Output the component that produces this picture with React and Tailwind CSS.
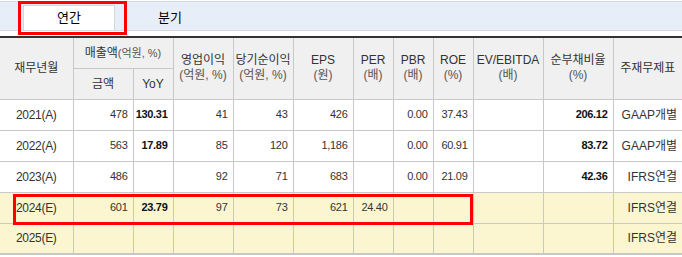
import React from "react";

const rows = [
  { y: "2021(A)", sales: "478", yoy: "130.31", op: "41", net: "43", eps: "426", per: "", pbr: "0.00", roe: "37.43", ev: "", debt: "206.12", fs: "GAAP개별" },
  { y: "2022(A)", sales: "563", yoy: "17.89", op: "85", net: "120", eps: "1,186", per: "", pbr: "0.00", roe: "60.91", ev: "", debt: "83.72", fs: "GAAP개별" },
  { y: "2023(A)", sales: "486", yoy: "", op: "92", net: "71", eps: "683", per: "", pbr: "0.00", roe: "21.09", ev: "", debt: "42.36", fs: "IFRS연결" },
  { y: "2024(E)", sales: "601", yoy: "23.79", op: "97", net: "73", eps: "621", per: "24.40", pbr: "", roe: "", ev: "", debt: "", fs: "IFRS연결", est: true },
  { y: "2025(E)", sales: "", yoy: "", op: "", net: "", eps: "", per: "", pbr: "", roe: "", ev: "", debt: "", fs: "IFRS연결", est: true },
];

const th = "border-l border-b border-[#c8c8c8] font-normal text-[#333] text-center align-middle whitespace-nowrap px-0";
const td = "border-l border-b border-[#c8c8c8] text-right pr-[5px] align-middle";

function Head({ top, sub }) {
  return (
    <div className="leading-[15px]">
      <div className="text-[12px]">{top}</div>
      <div className="text-[12px] text-[#555]">{sub}</div>
    </div>
  );
}

export default function App() {
  return (
    <div
      className="w-[682px] h-[257px] bg-white text-[#333] overflow-hidden"
      style={{ fontFamily: '"Liberation Sans", "Noto Sans CJK KR", sans-serif' }}
    >
      {/* tabs */}
      <div className="relative h-[35px]">
        <div className="mt-[1px] h-[30px] border-y border-[#d3dae8] bg-[#e8eef8] flex items-end pl-[23px]">
          <div className="w-[92px] h-[25px] bg-white border border-b-0 border-[#d0d6e2] flex items-center justify-center text-[13px] text-black">
            연간
          </div>
          <div className="w-[110px] h-[25px] flex items-center justify-center text-[13px] text-black">
            분기
          </div>
        </div>
        <div className="absolute left-[18px] top-0 w-[109px] h-[34px] border-[3px] border-[#f00]" />
      </div>

      {/* table */}
      <div className="relative">
        <table className="w-[682px] table-fixed border-collapse border-t-2 border-t-[#333] border-b-2 border-b-[#c8c8c8]">
          <colgroup>
            <col className="w-[73px]" />
            <col className="w-[60px]" />
            <col className="w-[40px]" />
            <col className="w-[60px]" />
            <col className="w-[60px]" />
            <col className="w-[60px]" />
            <col className="w-[40px]" />
            <col className="w-[40px]" />
            <col className="w-[40px]" />
            <col className="w-[70px]" />
            <col className="w-[70px]" />
            <col className="w-[69px]" />
          </colgroup>
          <thead className="bg-[#f0f0f0]">
            <tr className="h-[31px]">
              <th rowSpan={2} className={th + " border-l-0 text-[12px]"}>재무년월</th>
              <th colSpan={2} className={th + " text-[12px]"}>
                매출액<span className="text-[11px] text-[#555]">(억원, %)</span>
              </th>
              <th rowSpan={2} className={th}><Head top="영업이익" sub="(억원, %)" /></th>
              <th rowSpan={2} className={th}><Head top="당기순이익" sub="(억원, %)" /></th>
              <th rowSpan={2} className={th}><Head top="EPS" sub="(원)" /></th>
              <th rowSpan={2} className={th}><Head top="PER" sub="(배)" /></th>
              <th rowSpan={2} className={th}><Head top="PBR" sub="(배)" /></th>
              <th rowSpan={2} className={th}><Head top="ROE" sub="(%)" /></th>
              <th rowSpan={2} className={th}><Head top="EV/EBITDA" sub="(배)" /></th>
              <th rowSpan={2} className={th}><Head top="순부채비율" sub="(%)" /></th>
              <th rowSpan={2} className={th + " text-[12px]"}>주재무제표</th>
            </tr>
            <tr className="h-[31px]">
              <th className={th + " text-[12px]"}>금액</th>
              <th className={th + " text-[12px]"}>YoY</th>
            </tr>
          </thead>
          <tbody className="text-[11px] tracking-[-0.3px]">
            {rows.map((r) => (
              <tr key={r.y} className={"h-[31px] " + (r.est ? "bg-[#fcf6d0]" : "bg-white")}>
                <td className="border-b border-[#c8c8c8] text-[12px] text-center">{r.y}</td>
                <td className={td}>{r.sales}</td>
                <td className={td + " font-bold text-[#111]"}>{r.yoy}</td>
                <td className={td}>{r.op}</td>
                <td className={td}>{r.net}</td>
                <td className={td}>{r.eps}</td>
                <td className={td}>{r.per}</td>
                <td className={td}>{r.pbr}</td>
                <td className={td}>{r.roe}</td>
                <td className={td}>{r.ev}</td>
                <td className={td + " font-bold text-[#111]"}>{r.debt}</td>
                <td className={td + " text-center pr-0 text-[12px] tracking-normal"}>{r.fs}</td>
              </tr>
            ))}
          </tbody>
        </table>
        <div className="absolute left-[13px] top-[158px] w-[460px] h-[31px] border-[3px] border-[#f00]" />
      </div>
    </div>
  );
}
